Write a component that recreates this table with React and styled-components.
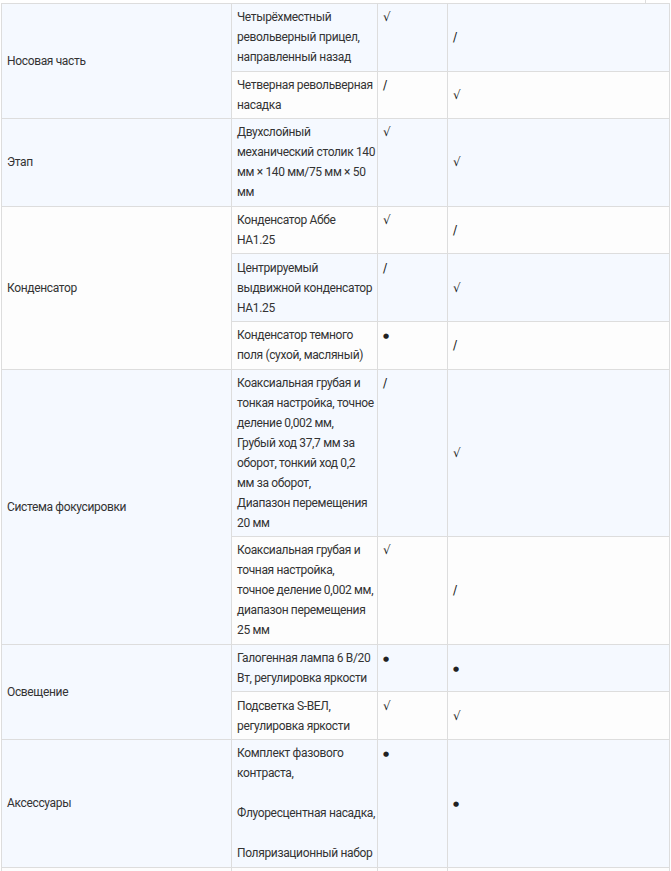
import React from "react";
import styled, { createGlobalStyle } from "styled-components";

const GlobalStyle = createGlobalStyle`
  html, body {
    margin: 0;
    padding: 0;
    background: #ffffff;
  }
  body {
    font-family: Roboto, "Noto Sans", Arial, sans-serif;
    color: #333333;
  }
`;

const Page = styled.div`
  padding-left: 1px;
  width: 668px;
`;

const TopStrip = styled.div`
  height: 3px;
  width: 644px;
  border-right: 1px solid #dddddd;
`;

const Table = styled.table`
  width: 668px;
  border-collapse: collapse;
  table-layout: fixed;
  font-size: 12px;
  line-height: 20px;
  letter-spacing: -0.35px;
`;

const Row = styled.tr`
  background: ${(p) => (p.$odd ? "#f5f9ff" : "#fdfdfd")};
`;

const Cell = styled.td`
  border: 1px solid #dddddd;
  padding: 3.3px 5px;
  vertical-align: ${(p) => p.$align || "middle"};
  white-space: ${(p) => (p.$nowrap ? "nowrap" : "normal")};
`;

const Mark = styled.span`
  font-family: "DejaVu Sans", "Noto Sans", sans-serif;
  font-size: ${(p) => (p.$dot ? "7px" : "12px")};
  vertical-align: ${(p) => (p.$dot ? "1px" : "baseline")};
  color: #222222;
`;

const rows = [
  {
    group: "Носовая часть",
    span: 2,
    lines: ["Четырёхместный", "револьверный прицел,", "направленный назад"],
    a: "√",
    b: "/",
  },
  { lines: ["Четверная револьверная", "насадка"], a: "/", b: "√" },
  {
    group: "Этап",
    span: 1,
    lines: ["Двухслойный", "механический столик 140", "мм × 140 мм/75 мм × 50", "мм"],
    a: "√",
    b: "√",
  },
  {
    group: "Конденсатор",
    span: 3,
    lines: ["Конденсатор Аббе", "НА1.25"],
    a: "√",
    b: "/",
  },
  { lines: ["Центрируемый", "выдвижной конденсатор", "НА1.25"], a: "/", b: "√" },
  { lines: ["Конденсатор темного", "поля (сухой, масляный)"], a: "●", b: "/" },
  {
    group: "Система фокусировки",
    span: 2,
    lines: [
      "Коаксиальная грубая и",
      "тонкая настройка, точное",
      "деление 0,002 мм,",
      "Грубый ход 37,7 мм за",
      "оборот, тонкий ход 0,2",
      "мм за оборот,",
      "Диапазон перемещения",
      "20 мм",
    ],
    a: "/",
    b: "√",
  },
  {
    lines: [
      "Коаксиальная грубая и",
      "точная настройка,",
      "точное деление 0,002 мм,",
      "диапазон перемещения",
      "25 мм",
    ],
    a: "√",
    b: "/",
  },
  {
    group: "Освещение",
    span: 2,
    lines: ["Галогенная лампа 6 В/20", "Вт, регулировка яркости"],
    a: "●",
    b: "●",
  },
  { lines: ["Подсветка S-ВЕЛ,", "регулировка яркости"], a: "√", b: "√" },
  {
    group: "Аксессуары",
    span: 1,
    lines: [
      "Комплект фазового",
      "контраста,",
      "",
      "Флуоресцентная насадка,",
      "",
      "Поляризационный набор",
    ],
    a: "●",
    b: "●",
  },
  // next row continues below the visible area
  { group: "\u00a0", span: 1, lines: [""], a: "", b: "" },
];

function renderMark(m) {
  if (!m) return "\u00a0";
  return <Mark $dot={m === "●"}>{m}</Mark>;
}

export default function App() {
  return (
    <Page>
      <GlobalStyle />
      <TopStrip />
      <Table>
        <colgroup>
          <col style={{ width: "230px" }} />
          <col style={{ width: "146px" }} />
          <col style={{ width: "70px" }} />
          <col style={{ width: "222px" }} />
        </colgroup>
        <tbody>
          {rows.map((r, i) => (
            <Row key={i} $odd={i % 2 === 0}>
              {r.group && <Cell rowSpan={r.span}>{r.group}</Cell>}
              <Cell $align="top" $nowrap>
                {r.lines.map((l, j) => (
                  <React.Fragment key={j}>
                    {j > 0 && <br />}
                    {l || "\u00a0"}
                  </React.Fragment>
                ))}
              </Cell>
              <Cell $align="top">{renderMark(r.a)}</Cell>
              <Cell>{renderMark(r.b)}</Cell>
            </Row>
          ))}
        </tbody>
      </Table>
    </Page>
  );
}
